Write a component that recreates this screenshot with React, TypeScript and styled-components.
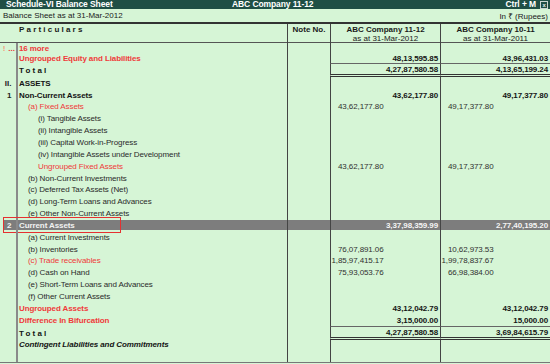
import styled, { createGlobalStyle, css } from "styled-components";

type Tone = "black" | "red" | "plain";

interface Line {
  gutter?: string;
  warn?: boolean;
  label: string;
  indent?: 0 | 1 | 2;
  tone?: Tone;
  bold?: boolean;
  italic?: boolean;
  spaced?: boolean;
  total?: boolean;
  active?: boolean;
  height?: number;
  cur?: [string, string];
  prev?: [string, string];
}

const GlobalStyle = createGlobalStyle`
  html, body {
    margin: 0;
    padding: 0;
    background: #d6f5d6;
  }
  body {
    font-family: "Liberation Sans", Arial, "Noto Sans", sans-serif;
    font-size: 8px;
    color: #222;
  }
`;

const Window = styled.div`
  width: 550px;
  height: 364px;
  display: flex;
  flex-direction: column;
  overflow: hidden;
  background: #d6f5d6;
`;

const TitleBar = styled.div`
  flex: none;
  height: 9px;
  display: grid;
  grid-template-columns: 226px auto 1fr;
  align-items: center;
  padding: 0 2px 0 6px;
  background: #1f4f45;
  color: #fff;
  font-weight: 700;
  font-size: 8.5px;
  line-height: 9px;
  letter-spacing: -0.1px;
  white-space: nowrap;
`;

const TitleRight = styled.div`
  justify-self: end;
  display: flex;
  align-items: center;
  gap: 4px;
`;

const CloseBox = styled.span`
  width: 6px;
  height: 6px;
  border: 1px solid #c9d6d2;
  font-size: 6px;
  line-height: 6px;
  text-align: center;
  color: #e6eeec;
`;

const SubHeader = styled.div`
  flex: none;
  height: 13px;
  display: flex;
  align-items: center;
  justify-content: space-between;
  padding: 0 2px 0 3px;
  border-bottom: 2px solid #333;
  color: #1a1a1a;
`;

const Header = styled.div`
  flex: none;
  height: 19px;
  box-sizing: border-box;
  display: grid;
  grid-template-columns: 287px 43px 110px 110px;
  border-bottom: 1px solid #555;
`;

const HeadCell = styled.div<{ $line?: boolean }>`
  border-left: ${(p) => (p.$line ? "1px solid #444" : "none")};
  padding-top: 1px;
  text-align: center;
  line-height: 9px;
  color: #1a1a1a;
  white-space: nowrap;
`;

const ParticularsHead = styled(HeadCell)`
  text-align: left;
  padding-left: 19px;
  font-weight: 700;
  letter-spacing: 2.2px;
  line-height: 10px;
`;

const Strong = styled.div`
  font-weight: 700;
`;

const Body = styled.div`
  flex: 1;
  display: flex;
  flex-direction: column;
  border-bottom: 1px solid #777;
  margin-bottom: 1px;
`;

const Row = styled.div<{ $h?: number; $active?: boolean }>`
  position: relative;
  flex: ${(p) => (p.$h ? "none" : "1")};
  height: ${(p) => (p.$h ? `${p.$h}px` : "auto")};
  display: grid;
  grid-template-columns: 18px 269px 43px 110px 110px;
  ${(p) =>
    p.$active &&
    css`
      background: linear-gradient(#7d7d7d, #7d7d7d) 3px 50% / calc(100% - 3px)
        10px no-repeat;
      color: #f2f2f2;
    `}
`;

const Gutter = styled.div<{ $tight?: boolean }>`
  box-sizing: border-box;
  border-right: 2px solid #8a8a8a;
  display: flex;
  align-items: center;
  justify-content: flex-end;
  padding-right: ${(p) => (p.$tight ? "1px" : "4.5px")};
  font-weight: 700;
  white-space: nowrap;
`;

const Bang = styled.span`
  color: #f4a07a;
  margin-right: 3px;
`;

const Dots = styled.span`
  color: #ee3535;
`;

const toneColor = { black: "#141414", red: "#f03a3a", plain: "#2a2a2a" };

const Label = styled.div<{
  $indent: number;
  $tone: Tone;
  $bold?: boolean;
  $italic?: boolean;
  $spaced?: boolean;
  $active?: boolean;
}>`
  display: flex;
  align-items: center;
  padding-left: ${(p) => [1, 10, 20][p.$indent]}px;
  color: ${(p) => (p.$active ? "#f2f2f2" : toneColor[p.$tone])};
  font-weight: ${(p) => (p.$bold ? 700 : 400)};
  font-style: ${(p) => (p.$italic ? "italic" : "normal")};
  letter-spacing: ${(p) => (p.$spaced ? "2.2px" : "-0.1px")};
  white-space: nowrap;
  overflow: hidden;
`;

const NoteCell = styled.div`
  border-left: 1px solid #444;
`;

const AmountCell = styled.div<{ $total?: boolean }>`
  border-left: 1px solid #444;
  display: grid;
  grid-template-columns: 1fr 1fr;
  ${(p) =>
    p.$total &&
    css`
      border-top: 1px solid #666;
      border-bottom: 3px double #333;
    `}
`;

const Amount = styled.div<{ $main?: boolean; $active?: boolean }>`
  display: flex;
  align-items: center;
  justify-content: flex-end;
  padding-right: 2px;
  font-weight: ${(p) => (p.$main ? 700 : 400)};
  color: ${(p) => (p.$active ? "#f4f4f4" : p.$main ? "#141414" : "#303030")};
  letter-spacing: -0.1px;
  white-space: nowrap;
`;

const Callout = styled.div`
  position: absolute;
  left: 2.5px;
  top: -2.5px;
  width: 118px;
  height: 16px;
  box-sizing: border-box;
  border: 1.5px solid #e53131;
  pointer-events: none;
`;

const lines: Line[] = [
  { warn: true, label: "16 more", tone: "red", bold: true, height: 10.2 },
  {
    label: "Ungrouped Equity and Liabilities",
    tone: "red",
    bold: true,
    height: 10.2,
    cur: ["", "48,13,595.85"],
    prev: ["", "43,96,431.03"],
  },
  {
    label: "Total",
    spaced: true,
    bold: true,
    total: true,
    height: 14,
    cur: ["", "4,27,87,580.58"],
    prev: ["", "4,13,65,199.24"],
  },
  { gutter: "II.", label: "ASSETS", bold: true },
  {
    gutter: "1",
    label: "Non-Current Assets",
    bold: true,
    cur: ["", "43,62,177.80"],
    prev: ["", "49,17,377.80"],
  },
  {
    label: "(a) Fixed Assets",
    indent: 1,
    tone: "red",
    cur: ["43,62,177.80", ""],
    prev: ["49,17,377.80", ""],
  },
  { label: "(i) Tangible Assets", indent: 2 },
  { label: "(ii) Intangible Assets", indent: 2 },
  { label: "(iii) Capital Work-in-Progress", indent: 2 },
  { label: "(iv) Intangible Assets under Development", indent: 2 },
  {
    label: "Ungrouped Fixed Assets",
    indent: 2,
    tone: "red",
    cur: ["43,62,177.80", ""],
    prev: ["49,17,377.80", ""],
  },
  { label: "(b) Non-Current Investments", indent: 1 },
  { label: "(c) Deferred Tax Assets (Net)", indent: 1 },
  { label: "(d) Long-Term Loans and Advances", indent: 1 },
  { label: "(e) Other Non-Current Assets", indent: 1 },
  {
    gutter: "2",
    label: "Current Assets",
    bold: true,
    active: true,
    cur: ["", "3,37,98,359.99"],
    prev: ["", "2,77,40,195.20"],
  },
  { label: "(a) Current Investments", indent: 1 },
  {
    label: "(b) Inventories",
    indent: 1,
    cur: ["76,07,891.06", ""],
    prev: ["10,62,973.53", ""],
  },
  {
    label: "(c) Trade receivables",
    indent: 1,
    tone: "red",
    cur: ["1,85,97,415.17", ""],
    prev: ["1,99,78,837.67", ""],
  },
  {
    label: "(d) Cash on Hand",
    indent: 1,
    cur: ["75,93,053.76", ""],
    prev: ["66,98,384.00", ""],
  },
  { label: "(e) Short-Term Loans and Advances", indent: 1 },
  { label: "(f) Other Current Assets", indent: 1 },
  {
    label: "Ungrouped Assets",
    tone: "red",
    bold: true,
    cur: ["", "43,12,042.79"],
    prev: ["", "43,12,042.79"],
  },
  {
    label: "Difference In Bifurcation",
    tone: "red",
    bold: true,
    cur: ["", "3,15,000.00"],
    prev: ["", "15,000.00"],
  },
  {
    label: "Total",
    spaced: true,
    bold: true,
    total: true,
    height: 14,
    cur: ["", "4,27,87,580.58"],
    prev: ["", "3,69,84,615.79"],
  },
  {
    label: "Contingent Liabilities and Commitments",
    bold: true,
    italic: true,
    height: 9,
  },
];

function Amounts({ pair, line }: { pair?: [string, string]; line: Line }) {
  return (
    <AmountCell $total={line.total}>
      <Amount $active={line.active}>{pair?.[0]}</Amount>
      <Amount $main $active={line.active}>
        {pair?.[1]}
      </Amount>
    </AmountCell>
  );
}

export default function App() {
  return (
    <Window>
      <GlobalStyle />
      <TitleBar>
        <span>Schedule-VI Balance Sheet</span>
        <span>ABC Company 11-12</span>
        <TitleRight>
          <span>Ctrl + M</span>
          <CloseBox>x</CloseBox>
        </TitleRight>
      </TitleBar>
      <SubHeader>
        <span>Balance Sheet as at 31-Mar-2012</span>
        <span>In ₹ (Rupees)</span>
      </SubHeader>
      <Header>
        <ParticularsHead>Particulars</ParticularsHead>
        <HeadCell $line>
          <Strong>Note No.</Strong>
        </HeadCell>
        <HeadCell $line>
          <Strong>ABC Company 11-12</Strong>
          <div>as at 31-Mar-2012</div>
        </HeadCell>
        <HeadCell $line>
          <Strong>ABC Company 10-11</Strong>
          <div>as at 31-Mar-2011</div>
        </HeadCell>
      </Header>
      <Body>
        {lines.map((line, i) => (
          <Row key={i} $h={line.height ?? 11.85} $active={line.active}>
            <Gutter $tight={line.warn}>
              {line.warn ? (
                <>
                  <Bang>!</Bang>
                  <Dots>...</Dots>
                </>
              ) : (
                line.gutter
              )}
            </Gutter>
            <Label
              $indent={line.indent ?? 0}
              $tone={line.tone ?? (line.indent ? "plain" : "black")}
              $bold={line.bold}
              $italic={line.italic}
              $spaced={line.spaced}
              $active={line.active}
            >
              {line.label}
            </Label>
            <NoteCell />
            <Amounts pair={line.cur} line={line} />
            <Amounts pair={line.prev} line={line} />
            {line.active && <Callout />}
          </Row>
        ))}
        <Row>
          <Gutter />
          <Label $indent={0} $tone="black" />
          <NoteCell />
          <AmountCell />
          <AmountCell />
        </Row>
      </Body>
    </Window>
  );
}
